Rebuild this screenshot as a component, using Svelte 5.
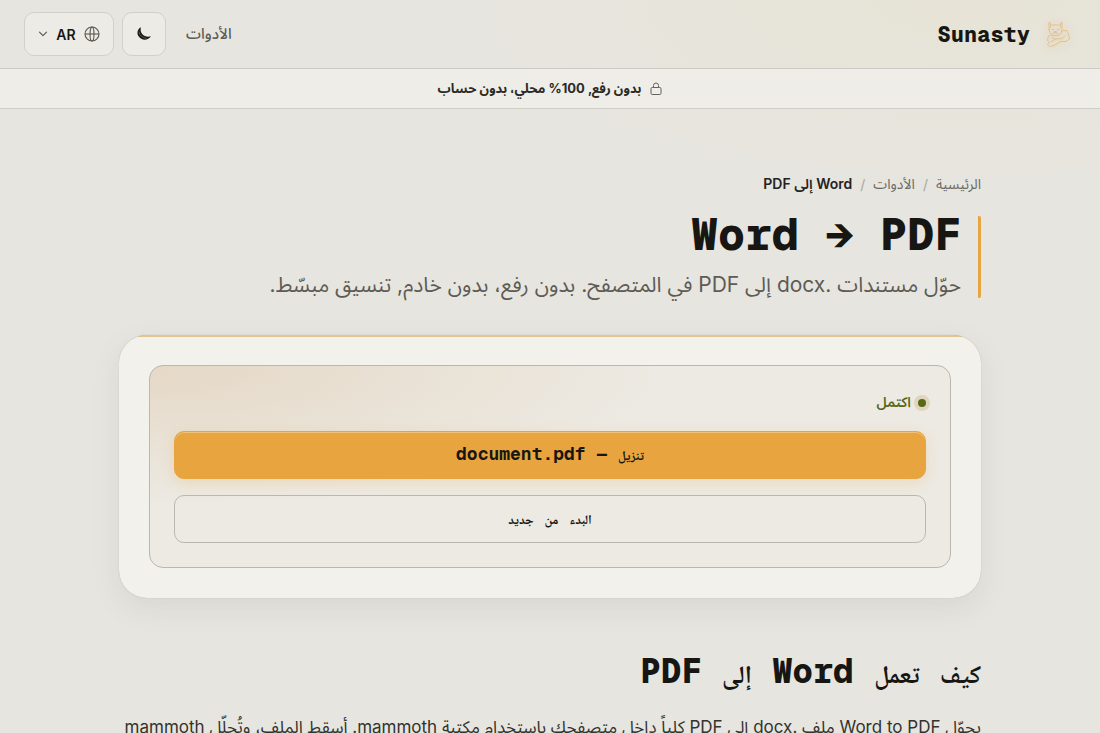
<script>
  let dark = $state(false);
</script>

<div class="page" dir="rtl" lang="ar">
  <header>
    <a class="brand" href="#home">
      <svg class="cat" width="28" height="28" viewBox="0 0 28 28" fill="none" stroke="#e6bd80" stroke-width="0.900" stroke-linejoin="round" stroke-linecap="round" aria-hidden="true">
        <path d="M5 9.500 5 2 8.500 5.200Q11.500 4.200 14.500 5.200L18 2 18 9.500Q18 14 14.500 15.500L8.500 15.500Q5 13.500 5 9.500Z" />
        <path d="M6.500 4.500v3M16.500 4.500v3M8 9.500h1.500M13.500 9.500h1.500M10.500 11.500h2l-1 1.200zM8.500 13.500l3-.8 3 .8" />
        <path d="M18 11 23 10.500 24 13 25.500 19 22 21.500 17 21.500 10 25.500 6 26.500 3.500 24.500 5.500 22 3.500 20.500 4.500 16 7.500 15" />
        <path d="M7 21.500 12 19 18 18.500M20.500 16l-2 2.500M8 17.500l3 1.500" />
      </svg>
      <span>Sunasty</span>
    </a>
    <nav>
      <a class="tools" href="#tools">الأدوات</a>
      <button class="chip theme" aria-label="الوضع الداكن" aria-pressed={dark} onclick={() => (dark = !dark)}>
        <svg width="16" height="16" viewBox="0 0 16 16" aria-hidden="true">
          <path d="M5 1.200C1.200 3 .6 7.300 2.600 10.300 5.500 14.800 12 14.800 14.900 10.300 11.500 11.200 8.200 10.400 6.200 8 4.500 6 4.200 3.600 5 1.200Z" fill="#191813" />
          <path d="M2.900 5.500C3.500 9.500 6.500 12 10.500 12.300" stroke="#86837a" stroke-width=".6" fill="none" />
        </svg>
      </button>
      <button class="chip lang" aria-label="اللغة AR">
        <svg width="16" height="16" viewBox="0 0 16 16" fill="none" stroke="#58564d" stroke-width="1.100" aria-hidden="true">
          <circle cx="8" cy="8" r="7" /><ellipse cx="8" cy="8" rx="2" ry="7" /><path d="M1 8h14" />
        </svg>
        <span>AR</span>
        <svg width="10" height="10" viewBox="0 0 10 10" fill="none" stroke="#58564d" stroke-width="1.100" stroke-linecap="round" stroke-linejoin="round" aria-hidden="true"><path d="m1.500 3.200 3.500 3.500 3.500-3.500" /></svg>
      </button>
    </nav>
  </header>

  <div class="notice">
    <svg width="12" height="14" viewBox="0 0 12 14" fill="none" stroke="#66645c" stroke-width="1" aria-hidden="true">
      <rect x="1" y="5.500" width="10" height="7" rx="1.200" /><path d="M3.500 5.500V3.500a2.500 2.500 0 0 1 5 0v2" />
    </svg>
    <span>بدون رفع, 100% محلي، بدون حساب</span>
  </div>

  <main>
    <nav class="crumbs" aria-label="مسار التنقل">
      <a href="#home">الرئيسية</a><i>/</i><a href="#tools">الأدوات</a><i>/</i><b>Word إلى PDF</b>
    </nav>
    <div class="hero">
      <h1>Word → PDF</h1>
      <p>حوّل مستندات .docx إلى PDF في المتصفح. بدون رفع، بدون خادم, تنسيق مبسّط.</p>
    </div>

    <section class="card">
      <div class="panel">
        <p class="status"><span class="dot"></span>اكتمل</p>
        <button class="action primary"><span class="ar">تنزيل</span> — document.pdf</button>
        <button class="action"><span class="ar">البدء</span> <span class="ar">من</span> <span class="ar">جديد</span></button>
      </div>
    </section>

    <section class="how">
      <h2><span class="ar">كيف</span> <span class="ar">تعمل</span> Word <span class="ar">إلى</span> PDF</h2>
      <p>يحوّل Word to PDF ملف .docx إلى PDF كلياً داخل متصفحك باستخدام مكتبة mammoth. أسقط الملف، وتُحلّل mammoth</p>
    </section>
  </main>
</div>

<style>
  :global(body) {
    margin: 0;
    background: #e6e5e0;
  }
  .page {
    --mono: "Geist Mono", "Noto Naskh Arabic", "DejaVu Sans Mono", monospace;
    font-family: Inter, "Noto Sans Arabic", sans-serif;
    color: #171612;
    height: 100vh;
    overflow: auto;
    scrollbar-width: none;
    background:
      radial-gradient(ellipse 600px 220px at 88% 0, #e7e3d6, transparent),
      #e6e5e0;
  }
  a {
    color: inherit;
    text-decoration: none;
  }
  h1,
  h2,
  p {
    margin: 0;
  }
  button {
    font: inherit;
    color: inherit;
    cursor: pointer;
  }
  header {
    box-sizing: border-box;
    height: 69px;
    padding: 0 28px 0 24px;
    display: flex;
    align-items: center;
    justify-content: space-between;
    border-bottom: 1px solid #cccbc6;
  }
  .brand {
    display: flex;
    align-items: center;
    gap: 14px;
    font: 800 22px/32px var(--mono);
  }
  .cat {
    filter: drop-shadow(0 2px 4px #e0a95270);
  }
  header nav {
    display: flex;
    align-items: center;
    gap: 8px;
  }
  .tools {
    font-size: 15px;
    font-weight: 500;
    color: #5d5b53;
    margin-left: 12px;
  }
  .chip {
    box-sizing: border-box;
    height: 44px;
    border: 1px solid #d1d0cb;
    border-radius: 10px;
    background: #edebe5;
    display: flex;
    align-items: center;
    justify-content: center;
  }
  .theme {
    width: 44px;
    padding: 0;
  }
  .lang {
    min-width: 90px;
    padding: 0 13px;
    gap: 8px;
    font-size: 14px;
    font-weight: 600;
  }
  .notice {
    box-sizing: border-box;
    height: 40px;
    display: flex;
    align-items: center;
    justify-content: center;
    gap: 9px;
    background: #eeede8;
    border-bottom: 1px solid #cfcec9;
    font-size: 13px;
    font-weight: 700;
    color: #2b2a25;
  }
  main {
    box-sizing: border-box;
    max-width: 910px;
    margin: 0 auto;
    padding: 64px 24px;
  }
  .crumbs {
    display: flex;
    align-items: center;
    gap: 8px;
    height: 22px;
    font-size: 14px;
    color: #6c6a63;
  }
  .crumbs i {
    font-style: normal;
    color: #a9a7a0;
  }
  .crumbs b {
    font-weight: 600;
    color: #24231e;
  }
  .hero {
    margin-top: 21px;
    padding-right: 17px;
    border-right: 3px solid #e7a43f;
    border-radius: 2px;
  }
  h1 {
    font: 800 45px/36px var(--mono);
  }
  .hero p {
    margin-top: 20px;
    font-size: 21px;
    line-height: 26px;
    color: #5d5b53;
  }
  .card {
    margin-top: 37px;
    padding: 30px;
    background:
      linear-gradient(#e3c592, #e3c592) top / 100% 2px no-repeat,
      #f2f1ec;
    border-radius: 28px;
    box-shadow:
      0 0 1px #a9a8a2,
      0 10px 28px #7774661f;
  }
  .panel {
    padding: 24px;
    border: 1px solid #b9b7b0;
    border-radius: 14px;
    background:
      radial-gradient(ellipse 520px 140px at 0 0, #e5d8c6, transparent),
      #edeae3;
    display: flex;
    flex-direction: column;
    gap: 16px;
  }
  .status {
    display: flex;
    align-items: center;
    gap: 7px;
    height: 25px;
    font-size: 14px;
    font-weight: 600;
    color: #596816;
  }
  .dot {
    width: 8px;
    height: 8px;
    border-radius: 50%;
    background: #596816;
    box-shadow: 0 0 0 4px #e0d6bf;
  }
  .action {
    box-sizing: border-box;
    height: 48px;
    padding: 0 16px 2px;
    border: 1px solid #b9b7b0;
    border-radius: 10px;
    background: transparent;
    font: 700 18px/24px var(--mono);
  }
  .ar {
    line-height: 1;
  }
  .action .ar {
    font-size: 13px;
  }
  .primary {
    border-color: #e7a43f;
    background: #e7a43f;
    box-shadow:
      inset 0 1px #f0c37d,
      0 4px 14px #e7a43f38;
  }
  .how {
    margin-top: 50px;
  }
  h2 {
    font: 800 34px/46px var(--mono);
  }
  h2 .ar {
    font-size: 25px;
  }
  .how p {
    margin-top: 18px;
    font-size: 17px;
    line-height: 30px;
    color: #33322d;
  }
</style>
